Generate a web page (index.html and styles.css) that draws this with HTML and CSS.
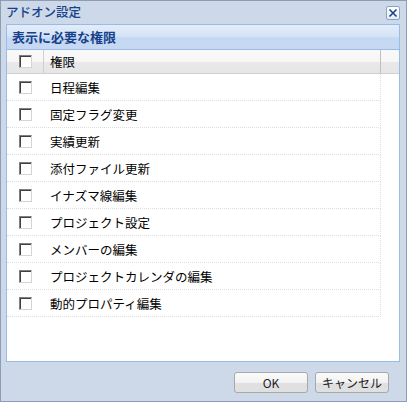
FILE: index.html
```html
<!DOCTYPE html>
<html lang="ja">
<head>
<meta charset="utf-8">
<link rel="stylesheet" href="styles.css">
</head>
<body>
<div class="window">
  <div class="titlebar">
    <span class="title">アドオン設定</span>
    <span class="close"><svg width="10" height="10" viewBox="0 0 10 10"><path d="M1.5 1.5 L8.5 8.5 M8.5 1.5 L1.5 8.5" stroke="#15428b" stroke-width="1.6" fill="none"/></svg></span>
  </div>
  <div class="panel">
    <div class="panel-header">表示に必要な権限</div>
    <div class="grid">
      <div class="grid-head">
        <div class="cell-check"><span class="cb"></span></div>
        <div class="cell-name">権限</div>
        <div class="cell-rest"></div>
      </div>
      <div class="row"><div class="cell-check"><span class="cb"></span></div><div class="cell-name">日程編集</div></div>
      <div class="row"><div class="cell-check"><span class="cb"></span></div><div class="cell-name">固定フラグ変更</div></div>
      <div class="row"><div class="cell-check"><span class="cb"></span></div><div class="cell-name">実績更新</div></div>
      <div class="row"><div class="cell-check"><span class="cb"></span></div><div class="cell-name">添付ファイル更新</div></div>
      <div class="row"><div class="cell-check"><span class="cb"></span></div><div class="cell-name">イナズマ線編集</div></div>
      <div class="row"><div class="cell-check"><span class="cb"></span></div><div class="cell-name">プロジェクト設定</div></div>
      <div class="row"><div class="cell-check"><span class="cb"></span></div><div class="cell-name">メンバーの編集</div></div>
      <div class="row"><div class="cell-check"><span class="cb"></span></div><div class="cell-name">プロジェクトカレンダの編集</div></div>
      <div class="row"><div class="cell-check"><span class="cb"></span></div><div class="cell-name">動的プロパティ編集</div></div>
    </div>
  </div>
  <div class="footer">
    <button class="btn">OK</button>
    <button class="btn">キャンセル</button>
  </div>
</div>
</body>
</html>
```

FILE: styles.css
```css
* { box-sizing: border-box; }
html, body { margin: 0; padding: 0; background: #ffffff; }
body {
  font-family: "Noto Sans CJK JP", "Noto Sans", sans-serif;
  font-size: 12px;
}
.window {
  width: 407px;
  height: 402px;
  border: 1px solid #8e9db3;
  background: #cdd9e8;
  display: flex;
  flex-direction: column;
}
.titlebar {
  height: 23px;
  display: flex;
  align-items: center;
  justify-content: space-between;
  padding: 0 6px 0 5px;
}
.title {
  color: #15428b;
  font-size: 12.5px;
  font-weight: 500;
  line-height: 16px;
  margin-top: -2px;
}
.close {
  width: 14px;
  height: 14px;
  border: 1px solid #8ca4c8;
  border-radius: 2px;
  background: linear-gradient(#ffffff, #e4ecf7);
  display: flex;
  align-items: center;
  justify-content: center;
  margin-top: 1px;
}
.panel {
  margin: 0 6px 0 5px;
  height: 338px;
  border: 1px solid #99bbe8;
  background: #ffffff;
  display: flex;
  flex-direction: column;
}
.panel-header {
  height: 25px;
  background: linear-gradient(#e3ecf9 0%, #d6e4f6 45%, #c5d8f2 55%, #c7d9f2 100%);
  border-bottom: 1px solid #99bbe8;
  color: #15428b;
  font-weight: bold;
  font-size: 13px;
  line-height: 24px;
  padding-left: 5px;
}
.grid-head {
  height: 24px;
  display: flex;
  background: linear-gradient(#f9f9f9 0%, #f6f6f6 50%, #e9e9e9 51%, #e6e6e6 100%);
  border-bottom: 1px solid #d0d0d0;
}
.grid-head .cell-check { border-right: 1px solid #d0d0d0; }
.grid-head .cell-name { width: 337px; border-right: 1px solid #c0c0c0; }
.cell-rest { flex: 1; }
.cell-check {
  width: 37px;
  display: flex;
  align-items: center;
  justify-content: center;
  padding-left: 1px;
}
.cell-name {
  width: 337px;
  padding-left: 6px;
  display: flex;
  align-items: center;
  font-size: 12.5px;
  color: #000;
}
.row {
  height: 27px;
  width: 374px;
  display: flex;
  border-bottom: 1px dotted #dedede;
  border-right: 1px dotted #dedede;
}
.cb {
  width: 13px;
  height: 13px;
  background: #ffffff;
  border-top: 1px solid #808080;
  border-left: 1px solid #808080;
  border-right: 1px solid #d8d4cc;
  border-bottom: 1px solid #d8d4cc;
  box-shadow: inset 1px 1px 0 #404040;
}
.footer {
  display: flex;
  justify-content: flex-end;
  gap: 7px;
  padding: 10px 17px 0 0;
}
.btn {
  width: 74px;
  height: 21px;
  border: 1px solid #a8a8a8;
  border-radius: 3px;
  background: linear-gradient(#fbfbfb 0%, #f2f2f2 50%, #e0e0e0 51%, #e0e0e0 100%);
  font-family: "Noto Sans CJK JP", "Noto Sans", sans-serif;
  font-size: 12px;
  color: #222;
  padding: 0;
  line-height: 18px;
}
```
